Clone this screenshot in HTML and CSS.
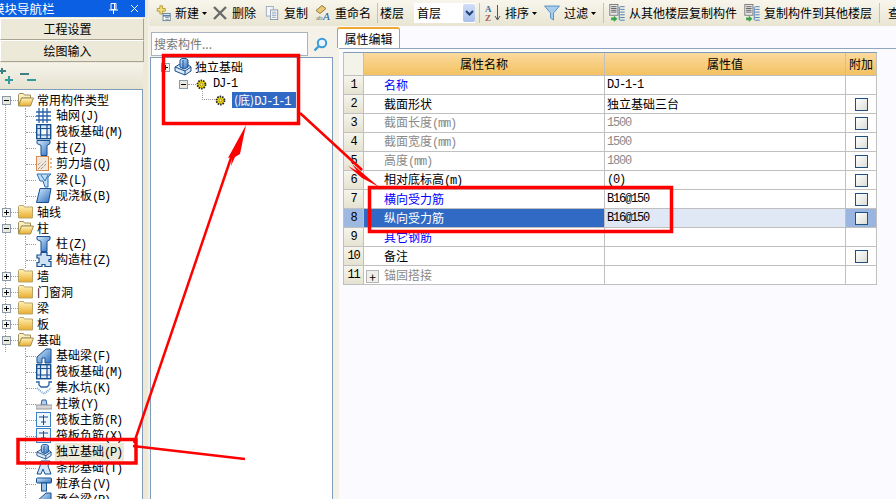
FILE: index.html
```html
<!DOCTYPE html>
<html lang="zh-CN">
<head>
<meta charset="utf-8">
<title>模块导航栏</title>
<link rel="stylesheet" href="styles.css">
</head>
<body>
<svg class="defs" aria-hidden="true">
  <defs>
    <linearGradient id="gf" x1="0" y1="0" x2="0" y2="1"><stop offset="0" stop-color="#fff3b8"/><stop offset="1" stop-color="#e9ad2c"/></linearGradient>
    <linearGradient id="gb" x1="0" y1="0" x2="1" y2="1"><stop offset="0" stop-color="#d7ecfb"/><stop offset="1" stop-color="#2c6fc0"/></linearGradient>
    <symbol id="plus" viewBox="0 0 9 9"><rect x=".5" y=".5" width="8" height="8" fill="#f4f3ee" stroke="#8a9aa8"/><path d="M2 4.500h5M4.500 2v5" stroke="#000"/></symbol>
    <symbol id="minus" viewBox="0 0 9 9"><rect x=".5" y=".5" width="8" height="8" fill="#e8e8e0" stroke="#8a9aa8"/><path d="M2 4.500h5" stroke="#000"/></symbol>
    <symbol id="fc" viewBox="0 0 16 14"><path d="M.5 3V1.500l1-1h4l1 1.500h8v11h-14z" fill="url(#gf)" stroke="#b9a56a"/></symbol>
    <symbol id="fo" viewBox="0 0 16 14"><path d="M.5 13V1.500l1-1h4l1 1.500h6v3h-9l-3 8z" fill="#f8efc4" stroke="#a08f58"/><path d="M.5 13l3-8h12l-3 8z" fill="url(#gf)" stroke="#a08f58"/></symbol>
    <symbol id="grid" viewBox="0 0 16 16"><path d="M0 4h15M0 8h15M0 12h15M3 0v15M7 0v15M11 0v15" stroke="#2b62a8" stroke-width="1.300" fill="none"/></symbol>
    <symbol id="raft" viewBox="0 0 16 16"><rect x=".7" y=".7" width="14" height="14" fill="#dce9f6" stroke="#174f8f" stroke-width="1.400"/><path d="M.5 4.500h14M.5 11h14M4.500.5v14M11 .5v14" stroke="#174f8f" stroke-width="1.200"/><rect x="6" y="6" width="4" height="4" fill="#fff"/></symbol>
    <symbol id="col" viewBox="0 0 16 16"><path d="M1 .5h13v3l-3 2v10H5v-10l-4-2z" fill="url(#gb)" stroke="#174f8f"/></symbol>
    <symbol id="wall" viewBox="0 0 16 16"><rect x=".5" y=".5" width="12" height="14" fill="#f0e6da" stroke="#d98a50"/><path d="M2 13l8-8M5 13l5-5M2 9l3-3" stroke="#777" stroke-dasharray="1 1"/><path d="M14 3h2M14 7h2M14 11h2" stroke="#d9731f"/></symbol>
    <symbol id="beam" viewBox="0 0 16 16"><path d="M1 2h14l-3 3v10H9L7 9H4z" fill="#bfe0f5" stroke="#2b6fb5"/><path d="M5 3l4 6 3-6" fill="none" stroke="#2b6fb5"/></symbol>
    <symbol id="slab" viewBox="0 0 16 16"><path d="M4 .5h11l-2.500 14H.5z" fill="url(#gb)" stroke="#174f8f"/></symbol>
    <symbol id="gz" viewBox="0 0 16 16"><path d="M5 .5h6v3h4v4h-2v2h2v5H9v-2H6v2H1v-4h2V6H1V3h4z" fill="#cfe2f4" stroke="#174f8f" stroke-width="1.200"/></symbol>
    <symbol id="fbeam" viewBox="0 0 16 16"><path d="M1 15V9l9-8h5v14H9v-5H6v5z" fill="url(#gb)" stroke="#174f8f"/></symbol>
    <symbol id="pit" viewBox="0 0 16 16"><path d="M0 2h3v3l2 2h6l2-2V2h3" fill="none" stroke="#2b62a8" stroke-width="1.300"/><path d="M1 8l7 6 7-6" fill="none" stroke="#7fa9d4" stroke-dasharray="1 1" stroke-width="2"/></symbol>
    <symbol id="pier" viewBox="0 0 16 16"><path d="M6 4h4l1 5H5z" fill="#b7cfe8" stroke="#2b62a8"/><rect x="0" y="9" width="16" height="4" fill="#d4d4d4" stroke="#9a9a9a"/></symbol>
    <symbol id="bar" viewBox="0 0 16 16"><rect x=".5" y=".5" width="14" height="14" fill="#eef5fc" stroke="#3b7fc4"/><path d="M3 5h9M7.500 3v10M5 10h5" stroke="#174f8f" fill="none"/></symbol>
    <symbol id="iso" viewBox="0 0 18 18"><path d="M1 9l5-3h7l4 3v4l-6 4-10-4z" fill="#dbe8f5" stroke="#174f8f"/><path d="M1 9l10 4 6-4M11 13v4" fill="none" stroke="#174f8f"/><path d="M6 9V2l2-1.500h4L14 2v7l-4 2z" fill="url(#gb)" stroke="#174f8f"/><path d="M9 2v8" stroke="#174f8f"/></symbol>
    <symbol id="strip" viewBox="0 0 16 16"><path d="M5 1h9l-2 5 3 8H9L7 9l-2 5H1l3-8z" fill="#d3e5f6" stroke="#174f8f"/></symbol>
    <symbol id="cap" viewBox="0 0 16 16"><rect x=".5" y="2" width="15" height="5" rx="1" fill="url(#gb)" stroke="#174f8f"/><rect x="5.500" y="7" width="5" height="8" fill="#9cc3e8" stroke="#174f8f"/></symbol>
    <symbol id="gear" viewBox="0 0 11 11"><circle cx="5.500" cy="5.500" r="4" fill="#f4d800" stroke="#222" stroke-dasharray="1.500 1" stroke-width="1.800"/><circle cx="5.500" cy="5.500" r="1.400" fill="#f9f6b0" stroke="#6a5a00" stroke-width=".6"/></symbol>
    <symbol id="copy" viewBox="0 0 17 20"><rect x=".5" y=".5" width="9" height="12" fill="#e8e8ea" stroke="#777"/><path d="M2 3h6M2 5h6M2 7h6M2 9h6" stroke="#555"/><path d="M12 3h5M12 6h5M12 9h5M12 12h5M12 15h5M12 18h5M11 3v15" stroke="#3d77b5" fill="none"/><path d="M2 15h3v-2l4 3.500-4 3.500v-2H2z" fill="#3aa04a"/></symbol>
    <symbol id="tri" viewBox="0 0 5 3"><path d="M0 0h5L2.500 3z" fill="#000"/></symbol>
  </defs>
</svg>

<div class="app">
  <aside class="nav">
    <div class="title">
      <span class="title-text">模块导航栏</span>
      <svg class="pin" viewBox="0 0 9 11"><path d="M2 .5h5v6H2zM0 7h9M4.500 7v4M5.500 1v5.500" stroke="#fff" fill="none"/></svg>
      <svg class="close" viewBox="0 0 9 9"><path d="M1 1l7 7M8 1L1 8" stroke="#fff" fill="none"/></svg>
    </div>
    <div class="navbtn">工程设置</div>
    <div class="navbtn">绘图输入</div>
    <div class="navtool">
      <svg class="expand" viewBox="0 0 14 16"><path d="M0 3h6M2 0v6" stroke="#3f7f86" stroke-width="2"/><path d="M5 12h8M9 8v8" stroke="#2f9aa0" stroke-width="2"/></svg>
      <svg class="collapse" viewBox="0 0 16 16"><path d="M0 6h9" stroke="#3f7f86" stroke-width="2"/><path d="M7 12h9" stroke="#2f9aa0" stroke-width="2"/></svg>
    </div>
    <div class="tree">
      <div class="spine"></div>
      <div class="node"><svg class="box"><use href="#minus"/></svg><i class="stub"></i><svg class="folder"><use href="#fo"/></svg><span>常用构件类型</span></div>
      <div class="kids">
        <div class="leaf"><i class="lstub"></i><svg class="ic"><use href="#grid"/></svg><span>轴网<b>(J)</b></span></div>
        <div class="leaf"><i class="lstub"></i><svg class="ic"><use href="#raft"/></svg><span>筏板基础<b>(M)</b></span></div>
        <div class="leaf"><i class="lstub"></i><svg class="ic"><use href="#col"/></svg><span>柱<b>(Z)</b></span></div>
        <div class="leaf"><i class="lstub"></i><svg class="ic"><use href="#wall"/></svg><span>剪力墙<b>(Q)</b></span></div>
        <div class="leaf"><i class="lstub"></i><svg class="ic"><use href="#beam"/></svg><span>梁<b>(L)</b></span></div>
        <div class="leaf"><i class="lstub"></i><svg class="ic"><use href="#slab"/></svg><span>现浇板<b>(B)</b></span></div>
      </div>
      <div class="node"><svg class="box"><use href="#plus"/></svg><i class="stub"></i><svg class="folder"><use href="#fc"/></svg><span>轴线</span></div>
      <div class="node"><svg class="box"><use href="#minus"/></svg><i class="stub"></i><svg class="folder"><use href="#fo"/></svg><span>柱</span></div>
      <div class="kids">
        <div class="leaf"><i class="lstub"></i><svg class="ic"><use href="#col"/></svg><span>柱<b>(Z)</b></span></div>
        <div class="leaf"><i class="lstub"></i><svg class="ic"><use href="#gz"/></svg><span>构造柱<b>(Z)</b></span></div>
      </div>
      <div class="node"><svg class="box"><use href="#plus"/></svg><i class="stub"></i><svg class="folder"><use href="#fc"/></svg><span>墙</span></div>
      <div class="node"><svg class="box"><use href="#plus"/></svg><i class="stub"></i><svg class="folder"><use href="#fc"/></svg><span>门窗洞</span></div>
      <div class="node"><svg class="box"><use href="#plus"/></svg><i class="stub"></i><svg class="folder"><use href="#fc"/></svg><span>梁</span></div>
      <div class="node"><svg class="box"><use href="#plus"/></svg><i class="stub"></i><svg class="folder"><use href="#fc"/></svg><span>板</span></div>
      <div class="node"><svg class="box"><use href="#minus"/></svg><i class="stub"></i><svg class="folder"><use href="#fo"/></svg><span>基础</span></div>
      <div class="kids">
        <div class="leaf"><i class="lstub"></i><svg class="ic"><use href="#fbeam"/></svg><span>基础梁<b>(F)</b></span></div>
        <div class="leaf"><i class="lstub"></i><svg class="ic"><use href="#raft"/></svg><span>筏板基础<b>(M)</b></span></div>
        <div class="leaf"><i class="lstub"></i><svg class="ic"><use href="#pit"/></svg><span>集水坑<b>(K)</b></span></div>
        <div class="leaf"><i class="lstub"></i><svg class="ic"><use href="#pier"/></svg><span>柱墩<b>(Y)</b></span></div>
        <div class="leaf"><i class="lstub"></i><svg class="ic"><use href="#bar"/></svg><span>筏板主筋<b>(R)</b></span></div>
        <div class="leaf"><i class="lstub"></i><svg class="ic"><use href="#bar"/></svg><span>筏板负筋<b>(X)</b></span></div>
        <div class="leaf current"><i class="lstub"></i><svg class="ic"><use href="#iso"/></svg><span>独立基础<b>(P)</b></span></div>
        <div class="leaf"><i class="lstub"></i><svg class="ic"><use href="#strip"/></svg><span>条形基础<b>(T)</b></span></div>
        <div class="leaf"><i class="lstub"></i><svg class="ic"><use href="#cap"/></svg><span>桩承台<b>(V)</b></span></div>
        <div class="leaf"><i class="lstub"></i><svg class="ic"><use href="#fbeam"/></svg><span>承台梁<b>(R)</b></span></div>
      </div>
    </div>
  </aside>

  <main class="work">
    <div class="toolbar">
      <span class="tb w1">
        <svg class="t16" viewBox="0 0 17 20"><path d="M2 5h3V2h3v3h3v3H8v3H5V8H2z" fill="#f3dc7a" stroke="#b29a3c"/><rect x="8.500" y="10.500" width="8" height="8" fill="#fff" stroke="#5d7fa6"/><path d="M8.500 13h8" stroke="#5d7fa6" stroke-width="2"/><path d="M11 15h4M11 17h4" stroke="#888"/></svg>
        新建<svg class="tri"><use href="#tri"/></svg></span>
      <span class="tb w2"><svg class="t14" viewBox="0 0 14 14"><path d="M1 1l12 12M13 1L1 13" stroke="#6b6b6b" stroke-width="2.400"/></svg>删除</span>
      <span class="tb w3"><svg class="t14" viewBox="0 0 14 16"><rect x=".5" y=".5" width="8" height="11" fill="#f4f6fa" stroke="#9aa7b8"/><rect x="5.500" y="4.500" width="8" height="11" fill="#fff" stroke="#7d8ea5"/><path d="M7 7h5M7 9h5M7 11h5M7 13h5" stroke="#8aa0bd"/></svg>复制</span>
      <span class="tb w4"><svg class="t16" viewBox="0 0 16 17"><path d="M1 6l6-5 4 3-6 5z" fill="#e9c878" stroke="#9a7a34"/><text class="ttxt" x="1" y="15">ab</text><text class="ttxt big" x="8" y="15">A</text></svg>重命名</span>
      <i class="sep"></i>
      <span class="tb lbl">楼层</span>
      <span class="combo"><span>首层</span><i class="cbtn"><svg viewBox="0 0 9 7"><path d="M1 1l3.500 3.500L8 1" fill="none" stroke="#1d3f78" stroke-width="2"/></svg></i></span>
      <i class="sep"></i>
      <span class="tb w5"><svg class="t16" viewBox="0 0 16 18"><text class="az a" x="0" y="8">A</text><text class="az z" x="0" y="17">Z</text><path d="M12.500 1v14M10 12l2.500 4 2.500-4" stroke="#555" fill="none"/></svg>排序<svg class="tri"><use href="#tri"/></svg></span>
      <span class="tb w6"><svg class="t16" viewBox="0 0 16 16"><path d="M.5 1h15l-6 7v7l-3-2V8z" fill="#a8cdea" stroke="#5b93c4"/></svg>过滤<svg class="tri"><use href="#tri"/></svg></span>
      <i class="sep s2"></i>
      <span class="tb w7"><svg class="t16"><use href="#copy"/></svg>从其他楼层复制构件</span>
      <span class="tb w8"><svg class="t16"><use href="#copy"/></svg>复制构件到其他楼层</span>
      <i class="sep s3"></i>
      <span class="tb">查找</span>
    </div>
    <div class="panes">
      <section class="mid">
        <div class="search">
          <span class="field">搜索构件...</span>
          <svg class="mag" viewBox="0 0 15 15"><circle cx="9" cy="6" r="4.200" fill="#eaf6ff" stroke="#3b9bd8" stroke-width="2"/><path d="M6 9l-4.500 4.500" stroke="#3b9bd8" stroke-width="2.400"/></svg>
        </div>
        <div class="ctree">
          <div class="c1"><svg class="box"><use href="#plus"/></svg><svg class="isoicon"><use href="#iso"/></svg><span>独立基础</span></div>
          <div class="c2"><svg class="box"><use href="#minus"/></svg><i class="cdot"></i><svg class="gear"><use href="#gear"/></svg><span class="mono">DJ-1</span></div>
          <div class="c3"><i class="cl"></i><svg class="gear"><use href="#gear"/></svg><span class="sel">(底)<em>DJ-1-1</em></span></div>
        </div>
      </section>
      <section class="props">
        <div class="tabs"><span class="tab">属性编辑</span></div>
        <table class="grid">
          <colgroup><col class="c-n"><col class="c-a"><col class="c-v"><col class="c-x"></colgroup>
          <thead><tr><th class="rn"></th><th>属性名称</th><th>属性值</th><th>附加</th></tr></thead>
          <tbody>
            <tr><td class="rn">1</td><td class="nm blue">名称</td><td class="val">DJ-1-1</td><td></td></tr>
            <tr><td class="rn">2</td><td class="nm">截面形状</td><td class="val cjk">独立基础三台</td><td class="ck"><i></i></td></tr>
            <tr class="dim"><td class="rn">3</td><td class="nm">截面长度<b>(mm)</b></td><td class="val">1500</td><td class="ck"><i></i></td></tr>
            <tr class="dim"><td class="rn">4</td><td class="nm">截面宽度<b>(mm)</b></td><td class="val">1500</td><td class="ck"><i></i></td></tr>
            <tr class="dim"><td class="rn">5</td><td class="nm">高度<b>(mm)</b></td><td class="val">1800</td><td class="ck"><i></i></td></tr>
            <tr><td class="rn">6</td><td class="nm">相对底标高<b>(m)</b></td><td class="val">(0)</td><td class="ck"><i></i></td></tr>
            <tr><td class="rn">7</td><td class="nm blue">横向受力筋</td><td class="val">B16@150</td><td class="ck"><i></i></td></tr>
            <tr class="cur"><td class="rn">8</td><td class="nm">纵向受力筋</td><td class="val">B16@150</td><td class="ck"><i></i></td></tr>
            <tr><td class="rn">9</td><td class="nm blue">其它钢筋</td><td class="val"></td><td></td></tr>
            <tr><td class="rn">10</td><td class="nm">备注</td><td class="val"></td><td class="ck"><i></i></td></tr>
            <tr class="dim"><td class="rn">11</td><td class="nm"><u class="exp">+</u>锚固搭接</td><td class="val"></td><td></td></tr>
          </tbody>
        </table>
      </section>
    </div>
  </main>
</div>

<svg class="marks" viewBox="0 0 896 499" aria-hidden="true">
  <g fill="none" stroke="#f00" stroke-width="3.500">
    <rect x="163.500" y="55.500" width="135" height="68"/>
    <rect x="18" y="439.500" width="118" height="23.500"/>
    <rect x="369.500" y="187.500" width="302" height="44"/>
  </g>
  <g fill="none" stroke="#f00" stroke-width="2.500">
    <path d="M134 443L232 155"/>
    <path d="M133 446L245 459"/>
    <path d="M300 113L362 170"/>
  </g>
  <g fill="#f00">
    <path d="M246 125L228 158L232 157L231 166L235 157L240 154z"/>
    <path d="M379 187L352 164L357 171L348 166L362 178z"/>
  </g>
</svg>
</body>
</html>
```

FILE: styles.css
```css
* { box-sizing: border-box; }
html, body { margin: 0; height: 100%; }
body {
  width: 896px; height: 499px; overflow: hidden; position: relative;
  font: 12px/16px "Noto Sans CJK SC", "Liberation Sans", sans-serif;
  color: #000; background: #ece9d8;
}
.defs { position: absolute; width: 0; height: 0; }
.app { display: flex; height: 499px; }
b, .mono, .sel em, .val, .grid td.rn {
  font: 12px/16px "Liberation Mono", monospace; letter-spacing: -1.200px;
}
b { font-weight: 400; }
i, u, em { font-style: normal; text-decoration: none; }
svg { flex: none; }

/* left navigator */
.nav { width: 148px; flex: none; display: flex; flex-direction: column; height: 499px; }
.title {
  width: 145px; height: 17px; flex: none; background: #0a5fe2; color: #fff;
  display: flex; align-items: center; overflow: hidden;
}
.title-text { margin-left: -8px; white-space: nowrap; flex: 1; font-size: 12.500px; }
.pin { width: 9px; height: 11px; margin-right: 12px; }
.close { width: 9px; height: 9px; margin-right: 6px; }
.navbtn {
  width: 144px; height: 22px; margin-top: 1px; flex: none; text-align: center; line-height: 20px; padding-right: 9px;
  background: #ece9d8; border: 1px solid #fff; border-right-color: #a8a491; border-bottom-color: #a8a491;
}
.navbtn + .navbtn { margin-top: 0; }
.navtool {
  width: 143px; height: 26px; margin-top: 1px; flex: none; display: flex; align-items: center;
  background: linear-gradient(#f5f3ea, #e6e3d2);
}
.expand { width: 14px; height: 16px; margin-right: 6px; }
.collapse { width: 16px; height: 16px; }
.tree {
  width: 143px; flex: 1; position: relative; overflow: hidden; background: #fff;
  border-top: 1px solid #7f9db9; border-right: 1px solid #7f9db9; padding-top: 2px;
}
.spine { position: absolute; left: 5px; top: 15px; height: 247px; border-left: 1px dotted #999; }
.node { height: 16px; display: flex; align-items: center; white-space: nowrap; padding-left: 2px; position: relative; }
.box { width: 9px; height: 9px; }
.stub { width: 7px; border-top: 1px dotted #999; }
.folder { width: 16px; height: 14px; margin-right: 3px; }
.kids { margin-left: 25px; border-left: 1px dotted #999; }
.leaf { height: 16px; display: flex; align-items: center; white-space: nowrap; }
.lstub { width: 10px; border-top: 1px dotted #999; }
.ic { width: 16px; height: 16px; margin-right: 4px; }
.current span { background: #ece9d8; padding: 0 2px 0 1px; margin-left: -1px; }

/* main */
.work { flex: 1; min-width: 0; display: flex; flex-direction: column; background: #f4f2e8; }
.toolbar {
  height: 26px; flex: none; display: flex; align-items: center; white-space: nowrap; padding-left: 6px;
  margin-left: 1px; background: linear-gradient(#f8f6ec, #e8e5d3); overflow: hidden;
}
.tb { display: flex; align-items: center; height: 20px; flex: none; }
.t16 { width: 16px; height: 18px; margin-right: 4px; }
.t14 { width: 14px; height: 14px; margin-right: 5px; }
.tri { width: 5px; height: 3px; margin-left: 3px; }
.w1 { width: 58px; }
.w2 { width: 52px; }
.w3 { width: 50px; }
.w4 { width: 62px; }
.sep { width: 1px; height: 20px; background: #c5c2ad; flex: none; }
.lbl { margin-left: 2px; width: 30px; }
.combo {
  width: 61px; height: 20px; background: #fff; display: flex; align-items: center; justify-content: space-between; flex: none;
  padding-left: 3px; margin: 0 4px;
}
.cbtn { width: 12px; height: 18px; background: linear-gradient(#d2def8, #a9c0ea); display: flex; align-items: center; justify-content: center; border-radius: 2px; }
.cbtn svg { width: 9px; height: 7px; }
.w5 { margin-left: 5px; width: 59px; }
.w6 { width: 56px; }
.s2 { margin: 0 5px 0 3px; }
.w7 { width: 135px; }
.w8 { width: 135px; }
.s3 { margin-right: 8px; }
.ttxt { font: 7px "Liberation Serif", serif; fill: #6a6a40; }
.ttxt.big { font: italic 11px "Liberation Serif", serif; fill: #1d5fa8; }
.az { font: bold 9px "Liberation Serif", serif; }
.az.a { fill: #3a6ea8; }
.az.z { fill: #a85a5a; }

.panes { flex: 1; display: flex; min-height: 0; }
.mid { width: 185px; flex: none; margin-left: 2px; padding-top: 6px; display: flex; flex-direction: column; }
.search { height: 24px; display: flex; align-items: center; flex: none; }
.field {
  width: 157px; height: 24px; margin-left: 1px; background: #fff; border: 1px solid #a9b4bf; color: #777;
  padding: 3px 0 0 2px; line-height: 16px;
}
.mag { width: 15px; height: 15px; margin-left: 5px; }
.ctree {
  width: 183px; flex: 1; margin-top: 1px; background: #fff; border: 1px solid #7f9db9; border-bottom: 0; white-space: nowrap;
}
.c1, .c2, .c3 { display: flex; align-items: center; height: 16px; }
.c1 { padding-left: 10px; margin-top: 1px; }
.isoicon { width: 18px; height: 18px; margin: 0 3px 0 4px; }
.c2 { padding-left: 28px; margin-top: 1px; }
.cdot { width: 8px; border-top: 1px dotted #999; }
.gear { width: 11px; height: 11px; margin-right: 6px; }
.c3 { padding-left: 51px; }
.cl { width: 13px; height: 9px; border-left: 1px dotted #999; border-bottom: 1px dotted #999; margin-top: -9px; }
.sel { background: #316ac5; color: #fff; width: 64px; height: 16px; padding-left: 2px; }

.props { flex: 1; min-width: 0; margin-left: 4px; background: #fbfbff; }
.tabs { height: 22px; margin-top: 1px; border-bottom: 1px solid #8fa6bd; }
.tab {
  display: inline-block; height: 21px; width: 63px; margin-left: -2px; text-align: center; line-height: 17px; padding-top: 1px;
  background: #fff; border: 1px solid #8fa6bd; border-bottom: 0; border-top: 2px solid #f0a830; border-radius: 3px 3px 0 0;
}
.grid { margin: 3px 0 0 4px; border-collapse: separate; border-spacing: 0; table-layout: fixed; width: 534px; background: #fff; border-left: 1px solid #c0c0c0; border-top: 1px solid #7f9db9; }
.c-n { width: 20px; }
.c-a { width: 241px; }
.c-v { width: 241px; }
.c-x { width: 31px; }
.grid th, .grid td {
  border: solid #c0c0c0; border-width: 0 1px 1px 0; padding: 0; height: 19px; line-height: 16px;
  overflow: hidden; white-space: nowrap;
}
.grid thead th { height: 23px; font-weight: 400; background: linear-gradient(#fbda9e, #f3c160); }
.grid thead th.rn { background: #f4f3ea; }
.grid td.rn { text-align: center; letter-spacing: -1.200px; background: linear-gradient(#f6f5ec, #e5e2d0); }
.nm { padding-left: 20px !important; }
.blue { color: #00f; }
.val { padding-left: 2px !important; }
.grid .val.cjk { font: 12px/16px "Noto Sans CJK SC", sans-serif; letter-spacing: 0; }
.dim td { color: #8a8a8a; }
.grid .dim td.rn { color: #000; }
.grid .cur .rn { background: #9db9e2; }
.cur .nm { background: #316ac5; color: #fff; }
.cur .val { background: #e0e8f5; }
.cur .ck { background: #9ab5e0; }
.ck { text-align: center; }
.ck i {
  display: block; width: 13px; height: 13px; margin: 0 auto;
  border: 1px solid #1c5180; background: linear-gradient(135deg, #fff, #dcdcd7);
}
.exp {
  display: inline-block; width: 13px; height: 13px; line-height: 11px; text-align: center; color: #000;
  background: #f0f0ea; border: 1px solid #b5b5b5; margin: 0 5px 0 -18px; vertical-align: -2px; font-size: 12px;
}

.marks { position: absolute; left: 0; top: 0; width: 896px; height: 499px; pointer-events: none; }
```
